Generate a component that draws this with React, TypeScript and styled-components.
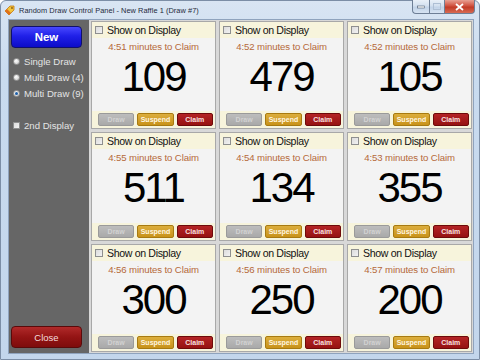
import React from "react";
import styled, { createGlobalStyle, css } from "styled-components";

const GlobalStyle = createGlobalStyle`
  html, body { margin: 0; padding: 0; width: 480px; height: 360px; overflow: hidden; background: #ffffff; }
  * { box-sizing: border-box; }
`;

const Window = styled.div`
  width: 480px;
  height: 360px;
  display: flex;
  flex-direction: column;
  background: linear-gradient(180deg, #d9e5f3 0%, #c9dbef 20%, #c3d6ec 100%);
  border: 1px solid #7c8ea6;
  border-radius: 6px 6px 0 0;
  font-family: "Liberation Sans", Arial, sans-serif;
`;

const TitleBar = styled.div`
  height: 18px;
  display: flex;
  align-items: center;
  padding-left: 3px;
  gap: 4px;
  position: relative;
`;

const TitleText = styled.span`
  font-size: 7.4px;
  color: #1e2a3a;
  letter-spacing: 0.05px;
`;

const Controls = styled.div`
  position: absolute;
  top: -1px;
  right: 4px;
  display: flex;
`;

const CtlBtn = styled.div<{ $kind: "min" | "max" | "close" }>`
  height: 14px;
  display: flex;
  align-items: center;
  justify-content: center;
  border: 1px solid #6e7f96;
  border-top: none;
  ${(p) =>
    p.$kind === "close"
      ? css`
          width: 31px;
          border-radius: 0 0 4px 0;
          background: linear-gradient(180deg, #e8a093 0%, #d0513f 45%, #c23b27 55%, #d86a52 100%);
        `
      : css`
          width: ${p.$kind === "min" ? 17 : 15}px;
          border-right: none;
          border-radius: ${p.$kind === "min" ? "0 0 0 4px" : "0"};
          background: linear-gradient(180deg, #e9f0f8 0%, #d3e0ef 45%, #c2d3e8 55%, #d6e3f2 100%);
        `}
`;

const Client = styled.div`
  flex: 1;
  display: flex;
  margin: 0 5px 5px 7px;
  border: 1px solid #8fa3bd;
  min-height: 0;
`;

const Sidebar = styled.div`
  width: 80px;
  flex-shrink: 0;
  background: #666666;
  display: flex;
  flex-direction: column;
  padding: 6px 7px 5px 2px;
`;

const BigButton = styled.div<{ $variant: "blue" | "red" }>`
  height: 22px;
  border-radius: 4px;
  display: flex;
  align-items: center;
  justify-content: center;
  color: #ffffff;
  ${(p) =>
    p.$variant === "blue"
      ? css`
          background: linear-gradient(180deg, #4848ff 0%, #2020e8 45%, #0c0cc8 100%);
          border: 1px solid #10106a;
          font-weight: bold;
          font-size: 11.5px;
        `
      : css`
          background: linear-gradient(180deg, #b02a2a 0%, #941414 50%, #7e0c0c 100%);
          border: 1px solid #5a0a0a;
          font-size: 9.5px;
          color: #f4dede;
        `}
`;

const OptionList = styled.div`
  display: flex;
  flex-direction: column;
  gap: 5px;
  margin-top: 8px;
  padding-left: 2px;
`;

const Option = styled.div<{ $gapTop?: number }>`
  display: flex;
  align-items: center;
  gap: 4px;
  height: 11px;
  font-size: 9.6px;
  color: #e4e4e4;
  white-space: nowrap;
  margin-top: ${(p) => p.$gapTop ?? 0}px;
`;

const Radio = styled.span<{ $on?: boolean }>`
  width: 7px;
  height: 7px;
  flex-shrink: 0;
  border-radius: 50%;
  background: radial-gradient(circle at 40% 35%, #ffffff 0%, #d6d6d6 70%, #b0b0b0 100%);
  border: 1px solid #9a9a9a;
  display: flex;
  align-items: center;
  justify-content: center;
  &::after {
    content: "";
    width: 3px;
    height: 3px;
    border-radius: 50%;
    background: ${(p) => (p.$on ? "#1d5fa8" : "transparent")};
  }
`;

const SmallBox = styled.span<{ $size?: number }>`
  width: ${(p) => p.$size ?? 7}px;
  height: ${(p) => p.$size ?? 7}px;
  border: 1px solid #8e8f8f;
  background: linear-gradient(135deg, #dcdcdc 0%, #f2f2f2 100%);
  flex-shrink: 0;
`;

const Spacer = styled.div`
  flex: 1;
`;

const Grid = styled.div`
  flex: 1;
  background: #d8d8d8;
  display: grid;
  grid-template-columns: repeat(3, 1fr);
  grid-template-rows: repeat(3, 1fr);
  gap: 3px;
  padding: 1px 1px 1px 2px;
  min-height: 0;
`;

const Card = styled.div`
  border: 1px solid #a8a8a8;
  display: flex;
  flex-direction: column;
  background: #f3f3f3;
  min-height: 0;
`;

const CardHeader = styled.div`
  height: 16px;
  background: #f7f4dc;
  display: flex;
  align-items: center;
  gap: 4px;
  padding-left: 3px;
  font-size: 10.6px;
  color: #111111;
  letter-spacing: -0.35px;
`;

const CardBody = styled.div`
  flex: 1;
  display: flex;
  flex-direction: column;
  align-items: center;
  padding-top: 3px;
`;

const Minutes = styled.div`
  font-size: 9.6px;
  color: #b5693a;
  letter-spacing: -0.1px;
`;

const Number = styled.div`
  font-size: 42px;
  line-height: 42px;
  color: #000000;
  margin-top: 4px;
  letter-spacing: -2px;
`;

const CardFooter = styled.div`
  height: 17px;
  background: #f7f4dc;
  display: flex;
  align-items: center;
  gap: 3px;
  padding: 0 2px 0 6px;
`;

const SmallBtn = styled.div<{ $kind: "draw" | "suspend" | "claim" }>`
  flex: 1;
  height: 13px;
  border-radius: 2px;
  display: flex;
  align-items: center;
  justify-content: center;
  font-size: 7px;
  font-weight: bold;
  ${(p) =>
    p.$kind === "draw"
      ? css`
          background: linear-gradient(180deg, #bdbdbd 0%, #a9a9a9 100%);
          border: 1px solid #9a9a9a;
          color: #d2d2d2;
        `
      : p.$kind === "suspend"
      ? css`
          background: linear-gradient(180deg, #dcae3c 0%, #c8921a 100%);
          border: 1px solid #a87a10;
          color: #fff6e0;
        `
      : css`
          background: linear-gradient(180deg, #b42424 0%, #961212 100%);
          border: 1px solid #6e0a0a;
          color: #f8e0e0;
        `}
`;

const AppIcon = () => (
  <svg width="11" height="11" viewBox="0 0 11 11">
    <polygon points="1,6 6,1 10,1 10,5 5,10" fill="#f3c43a" stroke="#c07a10" strokeWidth="0.8" />
    <polygon points="1,6 3,4 7,8 5,10" fill="#e0701c" />
    <circle cx="8" cy="3" r="0.9" fill="#8a5a10" />
  </svg>
);

const draws = [
  { t: "4:51", n: "109" },
  { t: "4:52", n: "479" },
  { t: "4:52", n: "105" },
  { t: "4:55", n: "511" },
  { t: "4:54", n: "134" },
  { t: "4:53", n: "355" },
  { t: "4:56", n: "300" },
  { t: "4:56", n: "250" },
  { t: "4:57", n: "200" },
];

export default function App() {
  return (
    <>
      <GlobalStyle />
      <Window>
        <TitleBar>
          <AppIcon />
          <TitleText>Random Draw Control Panel - New Raffle 1 (Draw #7)</TitleText>
          <Controls>
            <CtlBtn $kind="min">
              <svg width="8" height="4" viewBox="0 0 8 4">
                <rect x="0.5" y="1" width="7" height="2" fill="#ffffff" stroke="#4a5a70" strokeWidth="0.6" />
              </svg>
            </CtlBtn>
            <CtlBtn $kind="max">
              <svg width="8" height="7" viewBox="0 0 8 7">
                <rect x="0.5" y="0.5" width="7" height="6" fill="none" stroke="#aebfd4" strokeWidth="1" />
              </svg>
            </CtlBtn>
            <CtlBtn $kind="close">
              <svg width="9" height="8" viewBox="0 0 9 8">
                <path d="M1 1 L8 7 M8 1 L1 7" stroke="#ffffff" strokeWidth="1.8" />
              </svg>
            </CtlBtn>
          </Controls>
        </TitleBar>
        <Client>
          <Sidebar>
            <BigButton $variant="blue">New</BigButton>
            <OptionList>
              <Option>
                <Radio />
                Single Draw
              </Option>
              <Option>
                <Radio />
                Multi Draw (4)
              </Option>
              <Option>
                <Radio $on />
                Multi Draw (9)
              </Option>
              <Option $gapTop={16}>
                <SmallBox />
                2nd Display
              </Option>
            </OptionList>
            <Spacer />
            <BigButton $variant="red">Close</BigButton>
          </Sidebar>
          <Grid>
            {draws.map((d, i) => (
              <Card key={i}>
                <CardHeader>
                  <SmallBox $size={8} />
                  Show on Display
                </CardHeader>
                <CardBody>
                  <Minutes>{d.t} minutes to Claim</Minutes>
                  <Number>{d.n}</Number>
                </CardBody>
                <CardFooter>
                  <SmallBtn $kind="draw">Draw</SmallBtn>
                  <SmallBtn $kind="suspend">Suspend</SmallBtn>
                  <SmallBtn $kind="claim">Claim</SmallBtn>
                </CardFooter>
              </Card>
            ))}
          </Grid>
        </Client>
      </Window>
    </>
  );
}
